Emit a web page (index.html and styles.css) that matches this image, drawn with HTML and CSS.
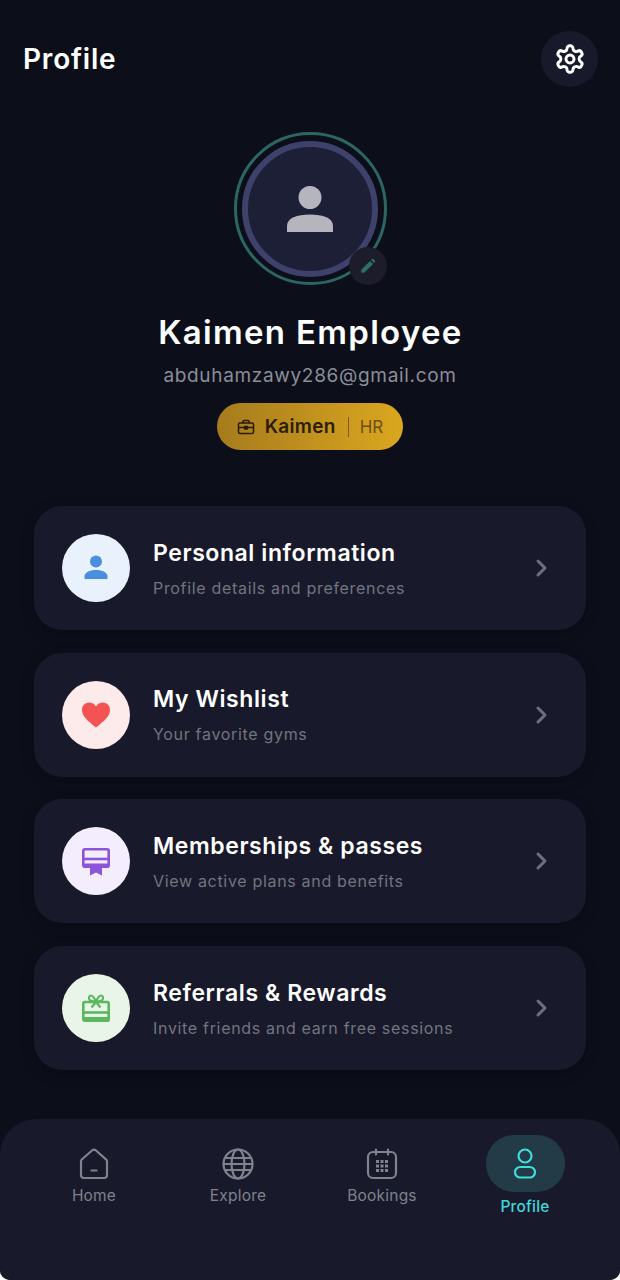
FILE: index.html
```html
<!doctype html>
<html lang="en">
<head>
<meta charset="utf-8">
<title>Profile</title>
<meta name="viewport" content="width=device-width,initial-scale=1">
<link rel="stylesheet" href="styles.css">
</head>
<body>
<div class="screen">
  <header class="topbar">
    <h1>Profile</h1>
    <button type="button" class="gear" aria-label="Settings">
      <svg width="32" height="32" viewBox="0 0 24 24" fill="none" stroke="#fff" stroke-width="2.200" stroke-linejoin="round">
        <path d="M12.22 2h-.44a2 2 0 0 0-2 2v.18a2 2 0 0 1-1 1.73l-.43.25a2 2 0 0 1-2 0l-.15-.08a2 2 0 0 0-2.73.73l-.22.38a2 2 0 0 0 .73 2.73l.15.1a2 2 0 0 1 1 1.72v.51a2 2 0 0 1-1 1.74l-.15.09a2 2 0 0 0-.73 2.73l.22.38a2 2 0 0 0 2.73.73l.15-.08a2 2 0 0 1 2 0l.43.25a2 2 0 0 1 1 1.73V20a2 2 0 0 0 2 2h.44a2 2 0 0 0 2-2v-.18a2 2 0 0 1 1-1.73l.43-.25a2 2 0 0 1 2 0l.15.08a2 2 0 0 0 2.73-.73l.22-.39a2 2 0 0 0-.73-2.73l-.15-.08a2 2 0 0 1-1-1.74v-.5a2 2 0 0 1 1-1.74l.15-.09a2 2 0 0 0 .73-2.73l-.22-.38a2 2 0 0 0-2.73-.73l-.15.08a2 2 0 0 1-2 0l-.43-.25a2 2 0 0 1-1-1.73V4a2 2 0 0 0-2-2z"/>
        <circle cx="12" cy="12" r="3"/>
      </svg>
    </button>
  </header>

  <section class="who">
    <div class="avatar-ring">
      <div class="avatar">
        <svg width="46" height="46" viewBox="0 0 46 46" fill="#b4b5bd">
          <circle cx="23" cy="11.500" r="11.500"/>
          <path d="M0 46v-6c0-8 10-11.500 23-11.500S46 32 46 40v6z"/>
        </svg>
      </div>
      <span class="edit">
        <svg width="18" height="18" viewBox="0 0 20 20" fill="#2a6f68">
          <path d="M2.500 17.500v-3.300L12.300 4.400l3.300 3.300-9.800 9.800z"/>
          <path d="M13.400 3.300l1.100-1.100a1 1 0 0 1 1.400 0l1.900 1.900a1 1 0 0 1 0 1.400l-1.100 1.100z"/>
        </svg>
      </span>
    </div>
    <h2>Kaimen Employee</h2>
    <p class="email">abduhamzawy286@gmail.com</p>
    <div class="company">
      <svg width="18" height="18" viewBox="0 0 18 18" fill="none" stroke="#2a1c05" stroke-width="1.500" stroke-linejoin="round">
        <rect x="1.500" y="5" width="15" height="10.500" rx="1.500"/>
        <path d="M6 5V3.500a1 1 0 0 1 1-1h4a1 1 0 0 1 1 1V5M1.500 9.500h15M7.500 8.500h3v2.500h-3z"/>
      </svg>
      <b>Kaimen</b>
      <span class="sep"></span>
      <span class="role">HR</span>
    </div>
  </section>

  <section class="menu">
    <a class="card" href="#">
      <span class="ico ico-blue">
        <svg width="26" height="26" viewBox="0 0 26 26" fill="#4a8fdf">
          <circle cx="13" cy="6.500" r="6"/>
          <path d="M1.500 24v-2.500c0-4 5-6.500 11.500-6.500s11.500 2.500 11.500 6.500V24z"/>
        </svg>
      </span>
      <span class="txt"><strong>Personal information</strong><small>Profile details and preferences</small></span>
      <svg class="chev" width="14" height="20" viewBox="0 0 14 20" fill="none" stroke="#6d6f7c" stroke-width="3" stroke-linecap="round" stroke-linejoin="round"><path d="M3 3l7 7-7 7"/></svg>
    </a>
    <a class="card" href="#">
      <span class="ico ico-red">
        <svg width="30" height="28" viewBox="0 0 30 28" fill="#f45353">
          <path d="M15 26.500C6 19.500 1 15 1 8.800 1 4.500 4.300 1.500 8.200 1.500c2.700 0 5.300 1.400 6.800 4 1.500-2.600 4.100-4 6.800-4 3.900 0 7.200 3 7.200 7.300 0 6.200-5 10.700-14 17.700z"/>
        </svg>
      </span>
      <span class="txt"><strong>My Wishlist</strong><small>Your favorite gyms</small></span>
      <svg class="chev" width="14" height="20" viewBox="0 0 14 20" fill="none" stroke="#6d6f7c" stroke-width="3" stroke-linecap="round" stroke-linejoin="round"><path d="M3 3l7 7-7 7"/></svg>
    </a>
    <a class="card" href="#">
      <span class="ico ico-purple">
        <svg width="30" height="30" viewBox="0 0 30 30" fill="none" stroke="#8a55d8" stroke-width="2.600" stroke-linejoin="round">
          <rect x="2.300" y="3.300" width="25.400" height="17.400" rx="1.500"/>
          <path d="M2 13h26"/>
          <path d="M2 19.500h26" stroke-width="4"/>
          <path d="M9 21h12v8.500l-6-3-6 3z" fill="#8a55d8" stroke="none"/>
        </svg>
      </span>
      <span class="txt"><strong>Memberships &amp; passes</strong><small>View active plans and benefits</small></span>
      <svg class="chev" width="14" height="20" viewBox="0 0 14 20" fill="none" stroke="#6d6f7c" stroke-width="3" stroke-linecap="round" stroke-linejoin="round"><path d="M3 3l7 7-7 7"/></svg>
    </a>
    <a class="card" href="#">
      <span class="ico ico-green">
        <svg width="30" height="30" viewBox="0 0 30 30" fill="none" stroke="#5cb85f" stroke-width="2.600" stroke-linejoin="round">
          <rect x="2.300" y="9" width="25.400" height="18.700" rx="1.500"/>
          <path d="M2 19.500h26"/>
          <path d="M2 25.500h26" stroke-width="3"/>
          <path d="M15 9c-1.500-4-3-6.500-5-6.500S7 5.500 9 7.500zm0 0c1.500-4 3-6.500 5-6.500S23 5.500 21 7.500zM15 9l-4.500 5.500M15 9l4.500 5.500" stroke-width="2.200"/>
        </svg>
      </span>
      <span class="txt"><strong>Referrals &amp; Rewards</strong><small>Invite friends and earn free sessions</small></span>
      <svg class="chev" width="14" height="20" viewBox="0 0 14 20" fill="none" stroke="#6d6f7c" stroke-width="3" stroke-linecap="round" stroke-linejoin="round"><path d="M3 3l7 7-7 7"/></svg>
    </a>
  </section>

  <nav class="tabs">
    <a class="tab" href="#">
      <span class="tab-ico">
        <svg width="32" height="32" viewBox="0 0 32 32" fill="none" stroke="#80828e" stroke-width="2.200" stroke-linecap="round" stroke-linejoin="round">
          <path d="M3 13.500a3 3 0 0 1 1-2.200L14 2.500a3 3 0 0 1 4 0l10 8.800a3 3 0 0 1 1 2.200V27a3 3 0 0 1-3 3H6a3 3 0 0 1-3-3z"/>
          <path d="M13.500 22.500h5"/>
        </svg>
      </span>
      <span>Home</span>
    </a>
    <a class="tab" href="#">
      <span class="tab-ico">
        <svg width="32" height="32" viewBox="0 0 32 32" fill="none" stroke="#80828e" stroke-width="2.200">
          <circle cx="16" cy="16" r="14.500"/>
          <ellipse cx="16" cy="16" rx="6.500" ry="14.500"/>
          <path d="M3.500 10h25M3.500 22h25M1.500 16h29"/>
        </svg>
      </span>
      <span>Explore</span>
    </a>
    <a class="tab" href="#">
      <span class="tab-ico">
        <svg width="32" height="32" viewBox="0 0 32 32" fill="none" stroke="#80828e" stroke-width="2.200" stroke-linecap="round">
          <rect x="2" y="4" width="28" height="26" rx="5"/>
          <path d="M10 1.500v5M22 1.500v5"/>
          <g fill="#80828e" stroke="none">
            <rect x="10" y="12" width="3" height="3"/><rect x="14.500" y="12" width="3" height="3"/><rect x="19" y="12" width="3" height="3"/>
            <rect x="10" y="16.500" width="3" height="3"/><rect x="14.500" y="16.500" width="3" height="3"/><rect x="19" y="16.500" width="3" height="3"/>
            <rect x="10" y="21" width="3" height="3"/><rect x="14.500" y="21" width="3" height="3"/><rect x="19" y="21" width="3" height="3"/>
          </g>
        </svg>
      </span>
      <span>Bookings</span>
    </a>
    <a class="tab tab-on" href="#">
      <span class="tab-ico">
        <svg width="32" height="32" viewBox="0 0 32 32" fill="none" stroke="#3fdcdc" stroke-width="2.200">
          <circle cx="16" cy="8" r="6.500"/>
          <rect x="6" y="19" width="20" height="10.500" rx="5.250"/>
        </svg>
      </span>
      <span>Profile</span>
    </a>
  </nav>
</div>
</body>
</html>
```

FILE: styles.css
```css
* { box-sizing: border-box; }
html, body { margin: 0; background: #fff; }
body {
  font-family: Inter, "Noto Sans", sans-serif;
  color: #fff;
}
a { color: inherit; text-decoration: none; }

.screen {
  display: flex;
  flex-direction: column;
  height: 1280px;
  background: #0c0f1a;
  border-radius: 0 0 10px 10px;
  overflow: hidden;
}

.topbar {
  display: flex;
  justify-content: space-between;
  align-items: center;
  padding: 31px 22px 0 23px;
}
.topbar h1 {
  margin: 0;
  font-size: 28px;
  font-weight: 600;
  letter-spacing: 0.8px;
}
.gear {
  display: flex;
  align-items: center;
  justify-content: center;
  width: 57px;
  height: 56px;
  padding: 0;
  border: 0;
  border-radius: 50%;
  background: #181a2b;
}

.who {
  display: flex;
  flex-direction: column;
  align-items: center;
  padding-top: 45px;
}
.avatar-ring {
  position: relative;
  display: flex;
  align-items: center;
  justify-content: center;
  width: 153px;
  height: 153px;
  border: 3px solid #2b6663;
  border-radius: 50%;
}
.avatar {
  display: flex;
  align-items: center;
  justify-content: center;
  width: 136px;
  height: 136px;
  border: 6px solid #3e4169;
  border-radius: 50%;
  background: #1c1f35;
}
.edit {
  position: absolute;
  right: -3px;
  bottom: -3px;
  display: flex;
  align-items: center;
  justify-content: center;
  width: 38px;
  height: 38px;
  border-radius: 50%;
  background: #1c1c2a;
}
.who h2 {
  margin: 26px 0 0 1px;
  font-size: 33px;
  line-height: 42px;
  font-weight: 600;
  letter-spacing: 1.3px;
}
.email {
  margin: 11px 0 0;
  font-size: 19px;
  line-height: 24px;
  letter-spacing: 0.67px;
  color: #8b8d99;
}
.company {
  display: flex;
  align-items: center;
  height: 47px;
  margin-top: 15px;
  padding: 0 20px;
  border-radius: 24px;
  background: linear-gradient(90deg, #a67b1d, #dba71f);
  color: #2a1c05;
}
.company b {
  margin-left: 10px;
  font-size: 19px;
  font-weight: 600;
  letter-spacing: 0.3px;
}
.sep {
  width: 1px;
  height: 20px;
  margin: 0 11px 0 12px;
  background: #7a5a12;
}
.role {
  font-size: 17px;
  color: #6b4f10;
}

.menu {
  display: flex;
  flex-direction: column;
  gap: 22.700px;
  padding: 56px 34px 0;
}
.card {
  display: flex;
  align-items: center;
  height: 124px;
  padding: 0 37px 0 28px;
  border-radius: 28px;
  background: #181a2b;
  box-shadow: 0 4px 14px rgba(0, 0, 0, 0.25);
}
.ico {
  display: flex;
  align-items: center;
  justify-content: center;
  flex: none;
  width: 68px;
  height: 68px;
  border-radius: 50%;
}
.ico-blue { background: #e9f2fc; }
.ico-red { background: #fdeaea; }
.ico-purple { background: #f4edfd; }
.ico-green { background: #e8f5e8; }
.txt {
  display: flex;
  flex-direction: column;
  flex: 1;
  margin-left: 23px;
}
.txt strong {
  font-size: 23px;
  line-height: 30px;
  font-weight: 600;
  letter-spacing: 0.58px;
}
.txt small {
  margin-top: 9px;
  font-size: 16px;
  line-height: 22px;
  letter-spacing: 0.68px;
  color: #72747f;
}

.tabs {
  display: grid;
  grid-template-columns: repeat(4, 1fr);
  margin-top: auto;
  height: 161px;
  padding: 16px 22px 0;
  border-radius: 36px 36px 0 0;
  background: #181a2b;
}
.tab {
  display: flex;
  flex-direction: column;
  align-items: center;
  font-size: 15.500px;
  line-height: 20px;
  letter-spacing: 0.2px;
  color: #7f818d;
}
.tab-ico {
  display: flex;
  align-items: center;
  justify-content: center;
  width: 79px;
  height: 57px;
}
.tab-on {
  margin-right: 2px;
  color: #3fd6dc;
  font-weight: 500;
}
.tab-on .tab-ico {
  margin-bottom: 5px;
  border-radius: 28px;
  background: #233a47;
}
.tab:not(.tab-on) .tab-ico { margin-bottom: -6px; }
```
